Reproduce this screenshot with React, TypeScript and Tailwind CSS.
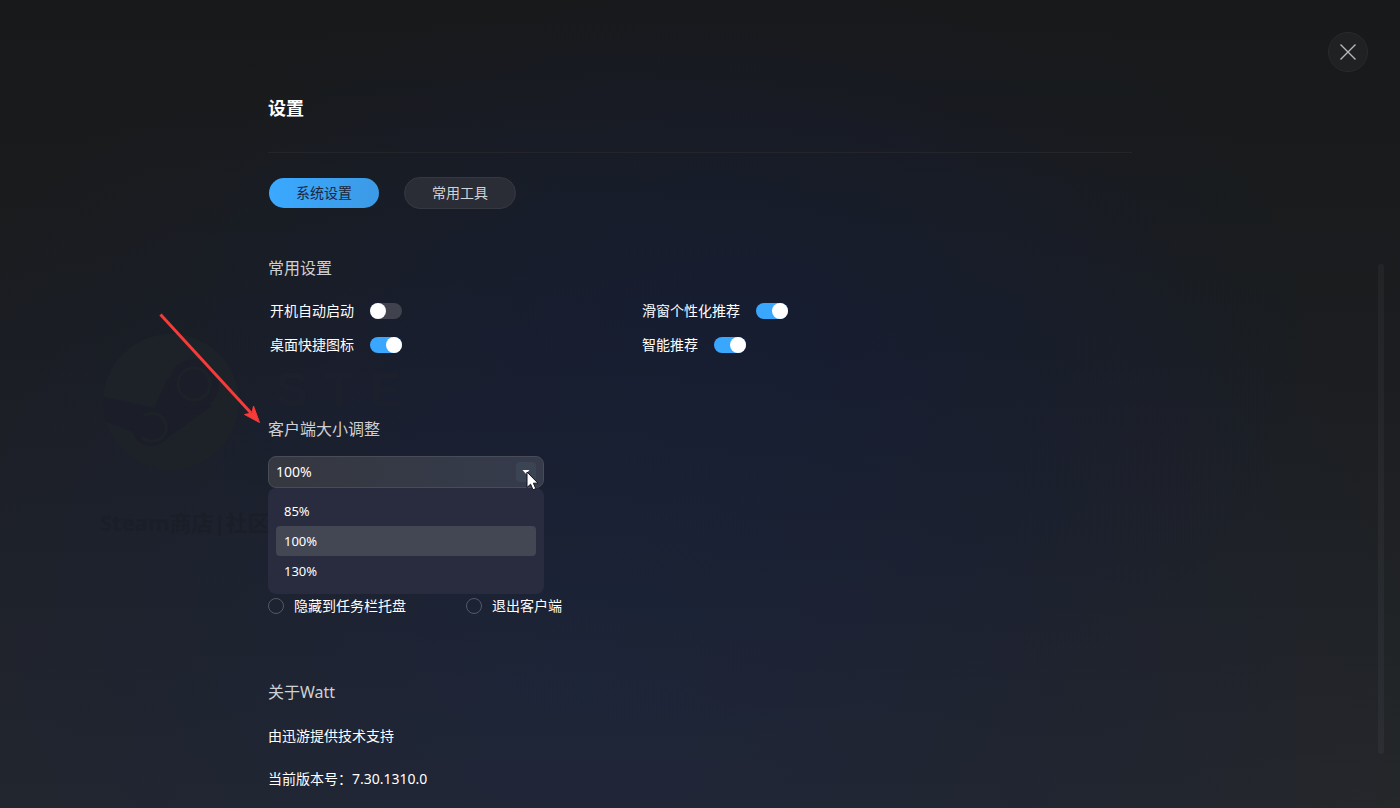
import { useState } from "react";

const sizes = ["85%", "100%", "130%"];

function Toggle({ label, on = false }: { label: string; on?: boolean }) {
  const [checked, setChecked] = useState(on);

  return (
    <label className="flex w-fit items-center gap-4 text-sm leading-4 text-white">
      <span>{label}</span>
      <input
        type="checkbox"
        role="switch"
        checked={checked}
        onChange={() => setChecked(!checked)}
        className="h-4 w-8 appearance-none rounded-full bg-[#40434e] before:block before:size-4 before:rounded-full before:bg-white checked:bg-[#3aa7ff] checked:before:ml-4"
      />
    </label>
  );
}

function CloseOption({ label }: { label: string }) {
  return (
    <label className="flex items-center gap-[10px] text-sm leading-4 text-white">
      <input
        type="radio"
        name="close-action"
        className="size-4 appearance-none rounded-full border border-[#555866] checked:border-4 checked:border-[#3aa7ff]"
      />
      <span>{label}</span>
    </label>
  );
}

function SectionTitle({ children }: { children: string }) {
  return <h2 className="text-base leading-6 text-[#cfd0d3]">{children}</h2>;
}

// Dimmed store page that shows through the settings layer
function Backdrop() {
  return (
    <div aria-hidden="true" className="pointer-events-none absolute inset-0 overflow-hidden">
      <svg className="absolute top-[330px] left-[100px] h-[145px] w-[145px]" viewBox="0 0 145 145">
        <defs>
          <clipPath id="disc">
            <circle cx="71" cy="72" r="68" />
          </clipPath>
        </defs>
        <circle cx="71" cy="72" r="68" fill="#1d2229" />
        <g clipPath="url(#disc)">
          <path d="M0 66 L54 78 L68 48 L112 76 L62 112 L0 90 Z" fill="#1b1e28" />
          <circle cx="94" cy="54" r="25" fill="#1b1e28" />
          <circle cx="51" cy="97" r="19" fill="#1b1e28" />
        </g>
        <circle cx="94" cy="54" r="16" fill="none" stroke="#1d2229" strokeWidth="3" />
        <path d="M44 86 a14 14 0 1 1 -2 21" fill="none" stroke="#1d2229" strokeWidth="3" />
      </svg>
      <p className="absolute top-[366px] left-[276px] flex gap-4 font-['Liberation_Sans',sans-serif] text-5xl leading-12 font-bold text-[#1b202c]">
        <span>S</span>
        <span>T</span>
        <span>E</span>
      </p>
      <p className="absolute top-[508px] left-[100px] text-[22px] leading-7 font-bold whitespace-nowrap text-[#191e27]">
        Steam商店|社区
      </p>
    </div>
  );
}

export default function App() {
  const [tab, setTab] = useState("系统设置");
  const [size, setSize] = useState("100%");
  const [open, setOpen] = useState(true);

  return (
    <div className="relative min-h-screen bg-[radial-gradient(ellipse_42%_50%_at_53%_42%,rgba(18,28,60,0.4),transparent),radial-gradient(ellipse_60%_85%_at_42%_85%,rgba(24,38,76,0.45),rgba(24,34,66,0.3)_55%,transparent),linear-gradient(#18191a,#1b1d20_45%,#25272a)] font-['Noto_Sans','Noto_Sans_CJK_SC',sans-serif]">
      <Backdrop />

      <button
        aria-label="关闭"
        className="absolute top-8 right-8 flex size-10 items-center justify-center rounded-full border border-[#292a2c] bg-[#202123]"
      >
        <svg width="18" height="18" viewBox="0 0 18 18" stroke="#b8b8b9" strokeWidth="1.4">
          <path d="M1.5 1.5 L16.5 16.5 M16.5 1.5 L1.5 16.5" />
        </svg>
      </button>
      <div className="absolute top-[264px] right-4 bottom-[54px] w-[6px] rounded-full bg-white/4" />

      <main className="relative mx-auto w-full max-w-[864px] pt-24 pb-4">
        <h1 className="border-b border-[#23252b] pb-8 text-lg leading-6 font-bold text-white">设置</h1>

        {/* Tabs */}
        <nav className="mt-6 flex gap-6">
          {["系统设置", "常用工具"].map((name) => (
            <button
              key={name}
              onClick={() => setTab(name)}
              className={
                tab === name
                  ? "h-8 w-28 rounded-full border border-transparent bg-linear-to-r from-[#3aa9ff] to-[#3c9ae6] bg-clip-padding text-sm text-[#1b2638]"
                  : "h-8 w-28 rounded-full border border-[#353841] bg-[#2a2d36] text-sm text-[#d2d3d6]"
              }
            >
              {name}
            </button>
          ))}
        </nav>

        {/* Common settings */}
        <section className="mt-[47px]">
          <SectionTitle>常用设置</SectionTitle>
          <div className="mt-[23px] flex pl-[2px]">
            <div className="flex w-[372px] flex-col gap-[18px]">
              <Toggle label="开机自动启动" />
              <Toggle label="桌面快捷图标" on />
            </div>
            <div className="flex flex-col gap-[18px]">
              <Toggle label="滑窗个性化推荐" on />
              <Toggle label="智能推荐" on />
            </div>
          </div>
        </section>

        {/* Client size */}
        <section className="mt-16">
          <SectionTitle>客户端大小调整</SectionTitle>
          <div className="relative mt-[15px] w-[276px]">
            <select
              aria-label="客户端大小调整"
              value={size}
              onChange={(e) => setSize(e.target.value)}
              onClick={() => setOpen(!open)}
              className="block h-8 w-full appearance-none rounded-lg border border-[#484b58] bg-linear-to-r from-[#353840] to-[#363b4c] px-[7px] text-sm text-white outline-none"
            >
              {sizes.map((s) => (
                <option key={s}>{s}</option>
              ))}
            </select>
            <span className="pointer-events-none absolute top-[6px] right-2 flex size-5 items-center justify-center rounded-sm bg-[#3a4453]">
              <svg width="8" height="4" viewBox="0 0 8 4" fill="#fff">
                <path d="M0.5 0 H7.5 L4 4 Z" />
              </svg>
            </span>
            {open && (
              <ul role="listbox" className="absolute top-8 left-0 z-10 w-full rounded-lg bg-[#282c3e] p-2">
                {sizes.map((s) => (
                  <li key={s} role="option" aria-selected={s === size}>
                    <button
                      onClick={() => {
                        setSize(s);
                        setOpen(false);
                      }}
                      className={
                        s === size
                          ? "block h-[30px] w-full rounded-sm bg-[#434753] px-2 pt-[2px] text-left text-[13px] text-white"
                          : "block h-[30px] w-full rounded-sm px-2 pt-[2px] text-left text-[13px] text-white"
                      }
                    >
                      {s}
                    </button>
                  </li>
                ))}
              </ul>
            )}
            {/* Mouse pointer */}
            <svg className="pointer-events-none absolute top-[15px] left-[258px] z-20" width="13" height="20" viewBox="0 0 13 20">
              <path
                d="M1 1 V16.5 L4.6 13.2 L7 18.8 L9.8 17.6 L7.4 12.2 H12 Z"
                fill="#fff"
                stroke="#10131c"
                strokeWidth="1"
              />
            </svg>
          </div>
        </section>

        {/* Close behaviour */}
        <section className="mt-[110px] flex">
          <div className="w-[198px]">
            <CloseOption label="隐藏到任务栏托盘" />
          </div>
          <CloseOption label="退出客户端" />
        </section>

        {/* About */}
        <section className="mt-[66px] text-sm leading-5 text-white">
          <SectionTitle>关于Watt</SectionTitle>
          <p className="mt-[22px]">由迅游提供技术支持</p>
          <p className="mt-[23px]">当前版本号：7.30.1310.0</p>
        </section>

        {/* Pointer arrow to the size setting */}
        <svg
          aria-hidden="true"
          className="pointer-events-none absolute top-[312px] -left-[110px]"
          width="106"
          height="114"
          viewBox="0 0 106 114"
        >
          <path d="M2.5 2.5 L93 101" stroke="#f63b38" strokeWidth="3" />
          <path d="M101.5 110.5 L86.5 102.5 L94 101 L95.5 94 Z" fill="#f63b38" stroke="#f63b38" strokeWidth="1" />
        </svg>
      </main>
    </div>
  );
}
